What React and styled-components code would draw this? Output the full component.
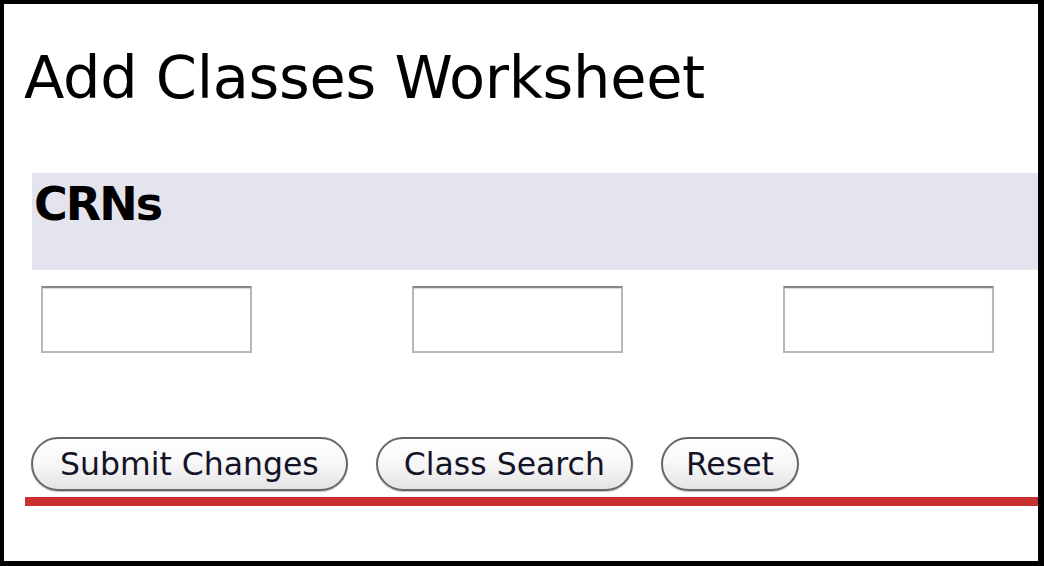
import React from "react";
import styled, { createGlobalStyle } from "styled-components";

const GlobalStyle = createGlobalStyle`
  html, body {
    margin: 0;
    padding: 0;
    background: #ffffff;
  }
  * {
    box-sizing: border-box;
  }
`;

const Frame = styled.div`
  width: 1044px;
  height: 566px;
  border-style: solid;
  border-color: #000;
  border-width: 4px 6px 5px 4px;
  padding-left: 17px;
  overflow: hidden;
  font-family: "DejaVu Sans", Verdana, sans-serif;
  color: #000;
`;

const Title = styled.h1`
  margin: 39px 0 0 3px;
  font-size: 59px;
  line-height: 70px;
  font-weight: normal;
  letter-spacing: -0.3px;
`;

const SectionHeader = styled.div`
  margin: 60px 0 0 11px;
  height: 97px;
  padding: 6px 0 0 2px;
  background: #e4e4ee;
  font-size: 46px;
  line-height: 50px;
  font-weight: bold;
  letter-spacing: -2px;
`;

const FieldRow = styled.div`
  display: flex;
  gap: 160px;
  margin: 16px 0 0 20px;
`;

const CrnInput = styled.input`
  width: 211px;
  height: 67px;
  margin: 0;
  padding: 0 6px;
  background: #fff;
  border: 2px solid #b8b8b8;
  border-top-color: #858585;
  box-shadow: inset 0 1px 1px rgba(0, 0, 0, 0.15);
  font-size: 28px;
  font-family: inherit;
  outline: none;
`;

const ButtonRow = styled.div`
  display: flex;
  gap: 28px;
  margin: 84px 0 0 10px;
`;

const PillButton = styled.button`
  height: 54px;
  margin: 0;
  padding: 0 ${(p) => p.$pad || 24}px;
  border: 2px solid #666;
  border-radius: 27px;
  background: linear-gradient(#ffffff 0%, #f8f8f8 45%, #e4e4e4 100%);
  box-shadow: 0 1px 1px rgba(0, 0, 0, 0.25);
  font-family: "DejaVu Sans", "Lucida Grande", sans-serif;
  font-size: 31.5px;
  line-height: 50px;
  color: #141428;
  cursor: pointer;
`;

const RedRule = styled.div`
  margin: 6px 0 0 4px;
  height: 9px;
  background: #c8312f;
`;

export default function App() {
  return (
    <>
      <GlobalStyle />
      <Frame>
        <Title>Add Classes Worksheet</Title>
        <SectionHeader>CRNs</SectionHeader>
        <FieldRow>
          <CrnInput type="text" />
          <CrnInput type="text" />
          <CrnInput type="text" />
        </FieldRow>
        <ButtonRow>
          <PillButton $pad={27}>Submit Changes</PillButton>
          <PillButton $pad={26}>Class Search</PillButton>
          <PillButton $pad={23}>Reset</PillButton>
        </ButtonRow>
        <RedRule />
      </Frame>
    </>
  );
}
